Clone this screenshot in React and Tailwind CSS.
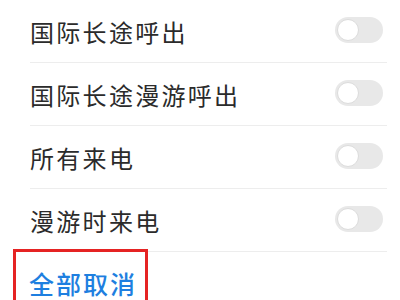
import React, {useState} from "react";

const rows = ["国际长途呼出", "国际长途漫游呼出", "所有来电", "漫游时来电"];

const Toggle = ({on, onClick}) => (
    <button type="button" onClick={onClick}
            className={`w-[48px] h-[26px] rounded-full p-[2px] flex ${on ? "bg-[#1e7fe0] justify-end" : "bg-[#e8e8e8] justify-start"}`}>
        <span className="w-[22px] h-[22px] rounded-full bg-white border border-[#dcdcdc] block"/>
    </button>
);

const App = () => {
    const [state, setState] = useState([false, false, false, false]);

    return (
        <div className="w-[400px] h-[300px] bg-white overflow-hidden"
             style={{fontFamily: '"Noto Sans CJK SC", "Noto Sans", sans-serif'}}>
            <div className="pl-[30px] pr-[13px]">
                {rows.map((label, i) => (
                    <div key={label} className="h-[63px] border-b border-[#ededed] flex items-center justify-between pt-[2px]">
                        <span className="text-[24px] tracking-[2.3px] text-[#2b2b2b] leading-none">{label}</span>
                        <div className="pr-[4px] -mt-[4px]">
                            <Toggle on={state[i]} onClick={() => setState(s => s.map((v, j) => j === i ? !v : v))}/>
                        </div>
                    </div>
                ))}
            </div>
            <div className="ml-[13px] mt-[-3px] w-[135px] h-[60px] border-[3px] border-[#e52323] pl-[13px] pt-[19px]">
                <span className="text-[25px] tracking-[2px] text-[#1e7fe0] leading-none font-medium">全部取消</span>
            </div>
        </div>
    );
}

export default App;
